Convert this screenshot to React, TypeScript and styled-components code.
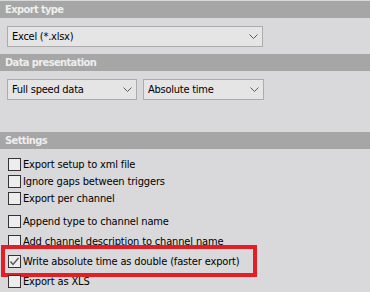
import { createGlobalStyle } from 'styled-components';
import styled from 'styled-components';

const GlobalStyle = createGlobalStyle`
  html, body {
    margin: 0;
    padding: 0;
    background: #d9d8da;
  }
  body {
    font-family: "DejaVu Sans Condensed", "DejaVu Sans", sans-serif;
    font-size: 11px;
    letter-spacing: -0.15px;
    color: #000;
  }
`;

const Page = styled.div`
  width: 370px;
  height: 292px;
  padding-top: 1px;
  box-sizing: border-box;
  overflow: hidden;
`;

const SectionHeader = styled.div`
  height: 17px;
  background: #a6a6a6;
  color: #eeeeee;
  font-weight: bold;
  font-size: 11px;
  letter-spacing: -0.6px;
  line-height: 17px;
  padding-left: 5px;
`;

const SectionBody = styled.div<{ $bottom: number }>`
  display: flex;
  gap: 6px;
  padding: 8px 0 ${(p) => p.$bottom}px 7px;
`;

const Dropdown = styled.div<{ $width: number }>`
  width: ${(p) => p.$width}px;
  height: 21px;
  box-sizing: border-box;
  border: 1px solid #acacac;
  background: #e5e5e5;
  display: flex;
  align-items: center;
  justify-content: space-between;
  padding: 0 4px 0 4px;
  line-height: 19px;
  letter-spacing: -0.25px;
`;

const Chevron = () => (
  <svg width="9" height="5" viewBox="0 0 9 5">
    <polyline points="0.5,0.5 4.5,4.5 8.5,0.5" fill="none" stroke="#5a5a5a" strokeWidth="1" />
  </svg>
);

const Select = ({ width, label }: { width: number; label: string }) => (
  <Dropdown $width={width}>
    <span>{label}</span>
    <Chevron />
  </Dropdown>
);

const OptionGroup = styled.div<{ $top: number }>`
  padding-top: ${(p) => p.$top}px;
`;

const Row = styled.label<{ $height: number; $offset: number }>`
  position: relative;
  display: flex;
  align-items: flex-start;
  height: ${(p) => p.$height}px;
  padding: ${(p) => p.$offset}px 0 0 8px;
  box-sizing: border-box;
  line-height: 13px;
`;

const Box = styled.span`
  width: 13px;
  height: 13px;
  box-sizing: border-box;
  border: 1px solid #333;
  background: #ededed;
  margin-right: 2px;
  flex: none;
  display: flex;
  align-items: center;
  justify-content: center;
`;

const Highlight = styled.span`
  position: absolute;
  left: 1px;
  top: -7px;
  width: 256px;
  height: 32px;
  box-sizing: border-box;
  border: 4px solid #e41e27;
  pointer-events: none;
`;

const Text = styled.span`
  white-space: nowrap;
`;

const Check = () => (
  <svg width="11" height="11" viewBox="0 0 11 11">
    <polyline points="1.5,5.5 4,8.5 9.5,2" fill="none" stroke="#555" strokeWidth="1.4" />
  </svg>
);

type Option = { label: string; checked?: boolean; marked?: boolean };

const firstGroup: Option[] = [
  { label: 'Export setup to xml file' },
  { label: 'Ignore gaps between triggers' },
  { label: 'Export per channel' },
];

const secondGroup: Option[] = [
  { label: 'Append type to channel name' },
  { label: 'Add channel description to channel name' },
  { label: 'Write absolute time as double (faster export)', checked: true, marked: true },
  { label: 'Export as XLS' },
];

const Checkbox = ({ option, height, offset }: { option: Option; height: number; offset: number }) => (
  <Row $height={height} $offset={offset}>
    <Box>{option.checked && <Check />}</Box>
    <Text>{option.label}</Text>
    {option.marked && <Highlight />}
  </Row>
);

export default function App() {
  return (
    <>
      <GlobalStyle />
      <Page>
        <SectionHeader>Export type</SectionHeader>
        <SectionBody $bottom={7}>
          <Select width={256} label="Excel (*.xlsx)" />
        </SectionBody>
        <SectionHeader>Data presentation</SectionHeader>
        <SectionBody $bottom={32}>
          <Select width={130} label="Full speed data" />
          <Select width={121} label="Absolute time" />
        </SectionBody>
        <SectionHeader>Settings</SectionHeader>
        <OptionGroup $top={7}>
          {firstGroup.map((o) => (
            <Checkbox key={o.label} option={o} height={17} offset={2} />
          ))}
        </OptionGroup>
        <OptionGroup $top={5}>
          {secondGroup.map((o) => (
            <Checkbox key={o.label} option={o} height={20} offset={3} />
          ))}
        </OptionGroup>
      </Page>
    </>
  );
}
